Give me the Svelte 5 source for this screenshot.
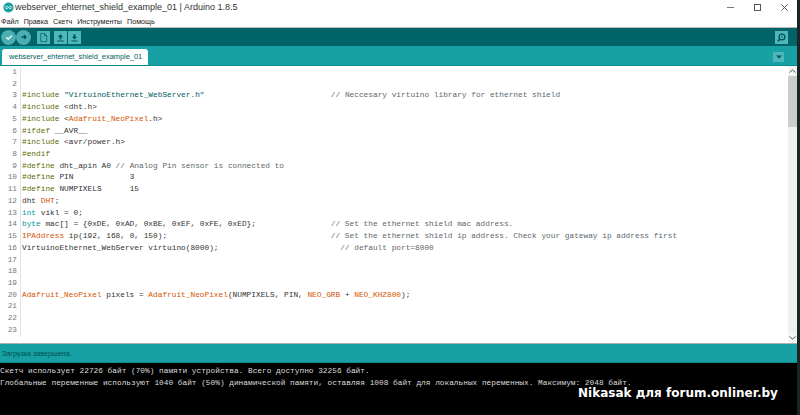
<script>
  // k: preprocessor, o: orange class names, t: types, s: strings, c: comments
  const code = [
    [],
    [],
    [['k', '#include'], ['', ' '], ['s', '"VirtuinoEthernet_WebServer.h"'], ['', '                           '], ['c', '// Neccesary virtuino library for ethernet shield']],
    [['k', '#include'], ['', ' <dht.h>']],
    [['k', '#include'], ['', ' <'], ['o', 'Adafruit_NeoPixel'], ['', '.h>']],
    [['k', '#ifdef'], ['', ' __AVR__']],
    [['k', '#include'], ['', ' <avr/power.h>']],
    [['k', '#endif']],
    [['k', '#define'], ['', ' dht_apin A0 '], ['c', '// Analog Pin sensor is connected to']],
    [['k', '#define'], ['', ' PIN            3']],
    [['k', '#define'], ['', ' NUMPIXELS      15']],
    [['', 'dht '], ['o', 'DHT'], ['', ';']],
    [['t', 'int'], ['', ' vikl = 0;']],
    [['t', 'byte'], ['', ' mac[] = {0xDE, 0xAD, 0xBE, 0xEF, 0xFE, 0xED};                '], ['c', '// Set the ethernet shield mac address.']],
    [['o', 'IPAddress'], ['', ' ip(192, 168, 0, 150);                                   '], ['c', '// Set the ethernet shield ip address. Check your gateway ip address first']],
    [['', 'VirtuinoEthernet_WebServer virtuino(8000);                          '], ['c', '// default port=8000']],
    [],
    [],
    [],
    [['o', 'Adafruit_NeoPixel'], ['', ' pixels = '], ['o', 'Adafruit_NeoPixel'], ['', '(NUMPIXELS, PIN, '], ['o', 'NEO_GRB'], ['', ' + '], ['o', 'NEO_KHZ800'], ['', ');']],
    [],
    [],
    []
  ];
  const menu = ['Файл', 'Правка', 'Скетч', 'Инструменты', 'Помощь'];
</script>

<div class="window">
  <div class="main">
    <header class="title">
      <svg class="logo" viewBox="0 0 14 14" width="11" height="11">
        <circle cx="7" cy="7" r="6.5" fill="#17a1a5" />
        <path d="M7 7C6 5.200 3.200 5.200 3 7s3 1.800 4 0c1-1.800 4-1.800 4 0S8 8.800 7 7z" fill="none" stroke="#fff" stroke-width="1" />
      </svg>
      <span class="title-text">webserver_ehternet_shield_example_01 | Arduino 1.8.5</span>
      <div class="win-btns">
        <svg width="7" height="7" viewBox="0 0 7 7"><path d="M0 3.500h7" stroke="#777" stroke-width="1" /></svg>
        <svg width="7" height="7" viewBox="0 0 7 7"><rect x=".5" y=".5" width="6" height="6" fill="none" stroke="#555" /></svg>
        <svg width="7" height="7" viewBox="0 0 7 7"><path d="M.5 .5l6 6M6.500 .5l-6 6" stroke="#555" /></svg>
      </div>
    </header>
    <nav class="menu">
      {#each menu as item}<span>{item}</span>{/each}
    </nav>

    <div class="toolbar">
      <span class="round">
        <svg viewBox="0 0 12 12"><path d="M3.200 6.200l2 2L8.800 4.400" fill="none" stroke="#e6f4f4" stroke-width="1.500" /></svg>
      </span>
      <span class="round">
        <svg viewBox="0 0 12 12"><path d="M3.500 6h4.500M6.200 4.200L8 6 6.200 7.800" fill="none" stroke="#004f52" stroke-width="1.300" /></svg>
      </span>
      <span class="square first">
        <svg viewBox="0 0 12 12"><path d="M3 1.500h4l2.500 2.500v6.500H3zM7 1.500V4h2.500" fill="none" stroke="#005c5f" stroke-width=".8" /></svg>
      </span>
      <span class="square">
        <svg viewBox="0 0 12 12"><path d="M6 2.500L8.800 5.500H7v2.500H5V5.500H3.200z" fill="#004f52" /><path d="M2.500 9.800h7" stroke="#004f52" /></svg>
      </span>
      <span class="square tight">
        <svg viewBox="0 0 12 12"><path d="M6 8.300L8.800 5.300H7V2.500H5v2.800H3.200z" fill="#004f52" /><path d="M2.500 9.800h7" stroke="#004f52" /></svg>
      </span>
      <span class="square search">
        <svg viewBox="0 0 12 12"><circle cx="6.500" cy="5.500" r="3.200" fill="none" stroke="#004f52" stroke-width="1.400" /><path d="M4.200 8L2 10" stroke="#004f52" stroke-width="1.600" /><path d="M5.500 5.500h2" stroke="#004f52" /></svg>
      </span>
    </div>

    <div class="tabs">
      <div class="tab">webserver_ehternet_shield_example_01</div>
      <span class="tab-menu"><svg viewBox="0 0 6 4" width="6" height="4"><path d="M0 .5h6L3 3.500z" fill="#004f52" /></svg></span>
    </div>

    <div class="editor">
      <div class="code">
        {#each code as line, i}
          <div class="line">
            <span class="num">{i + 1}</span><span class="src">{#each line as [cls, text]}<span class={cls}>{text}</span>{/each}</span>
          </div>
        {/each}
      </div>
      <div class="scroll">
        <span class="arrow"><svg viewBox="0 0 7 4" width="7" height="4"><path d="M.5 3.500L3.500 .8l3 2.700" fill="none" stroke="#555" /></svg></span>
        <span class="thumb"></span>
        <span class="arrow"><svg viewBox="0 0 7 4" width="7" height="4"><path d="M.5 .5l3 2.700 3-2.700" fill="none" stroke="#555" /></svg></span>
      </div>
    </div>

    <div class="status">Загрузка завершена.</div>
    <div class="console">
      <div class="out">Скетч использует 22726 байт (70%) памяти устройства. Всего доступно 32256 байт.</div>
      <div class="out">Глобальные переменные используют 1040 байт (50%) динамической памяти, оставляя 1008 байт для локальных переменных. Максимум: 2048 байт.</div>
    </div>
  </div>
  <div class="mark">Nikasak для forum.onliner.by</div>
</div>

<style>
  :global(body) { margin: 0; background: #fff; }
  .window { position: relative; width: 800px; height: 415px; overflow: hidden; display: flex; background: #1b2426; }
  .main { width: 797px; height: 415px; display: flex; flex-direction: column; background: #fff; }

  .title { height: 14px; flex: none; display: flex; align-items: center; padding-left: 3px; font: 9px "Liberation Sans", sans-serif; color: #333; }
  .title-text { margin-left: 1px; }
  .logo { flex: none; }
  .win-btns { margin-left: auto; display: flex; gap: 20px; padding-right: 9px; align-items: center; }
  .menu { height: 14px; flex: none; box-sizing: border-box; display: flex; gap: 5px; padding: 1px 0 0 1px; align-items: center; font: 7.2px "Liberation Sans", sans-serif; color: #222; border-bottom: 1px solid #bbb; }

  .toolbar { height: 18px; flex: none; background: #006468; display: flex; align-items: center; padding-left: 1px; }
  .round { width: 15px; height: 15px; border-radius: 50%; background: #4aaeb2; display: flex; align-items: center; justify-content: center; }
  .round svg { width: 12px; height: 12px; }
  .square { width: 13px; height: 13px; background: #4db7bb; display: flex; align-items: center; justify-content: center; margin-left: 4px; }
  .square svg { width: 11px; height: 11px; }
  .square.first { margin-left: 6px; }
  .square.tight { margin-left: 1px; }
  .square.search { margin-left: auto; margin-right: 9px; }

  .tabs { height: 20px; flex: none; background: #17a1a5; display: flex; align-items: flex-end; justify-content: space-between; padding-left: 2px; border-bottom: 1px solid #0e8a8e; box-sizing: border-box; }
  .tab { width: 146px; height: 16px; box-sizing: border-box; background: #fff; border-radius: 3px 3px 0 0; padding-left: 7px; font: 7.4px/15px "Liberation Sans", sans-serif; color: #005c5f; white-space: nowrap; }
  .tab-menu { width: 11px; height: 10px; background: #4db7bb; margin: 0 13px 3px 0; display: flex; align-items: center; justify-content: center; }

  .editor { height: 277px; flex: none; display: flex; border-bottom: 1px solid #b0b0b0; }
  .code { flex: 1; padding-top: 1px; font: 7.8px/11.73px "Liberation Mono", monospace; color: #333; overflow: hidden; }
  .line { display: flex; height: 11.73px; white-space: pre; }
  .num { width: 17px; flex: none; text-align: right; color: #777; border-right: 1px solid #e4e4e4; padding-right: 3px; margin-right: 1px; }
  .k { color: #5e6d03; }
  .o { color: #d35400; }
  .t { color: #00979c; }
  .s { color: #005c5f; }
  .c { color: #60686c; }

  .scroll { width: 9px; flex: none; display: flex; flex-direction: column; background: #efefef; }
  .arrow { height: 10px; display: flex; align-items: center; justify-content: center; background: #f4f4f4; }
  .thumb { height: 51px; background: #cdcdcd; }
  .arrow:last-child { margin-top: auto; }

  .status { height: 19px; flex: none; box-sizing: border-box; background: #17a1a5; border-bottom: 1px solid #0e8a8e; padding-left: 2px; font: 7.2px/19px "Liberation Sans", sans-serif; color: #004f52; }
  .console { flex: 1; min-height: 0; background: #000; color: #ddd; padding-top: 2px; font: 7.8px/12px "Liberation Mono", monospace; overflow: hidden; }
  .out { white-space: pre; }

  .mark { position: absolute; left: 578px; top: 386px; font: bold 12px "DejaVu Sans", sans-serif; color: #fff; white-space: nowrap; }
</style>
